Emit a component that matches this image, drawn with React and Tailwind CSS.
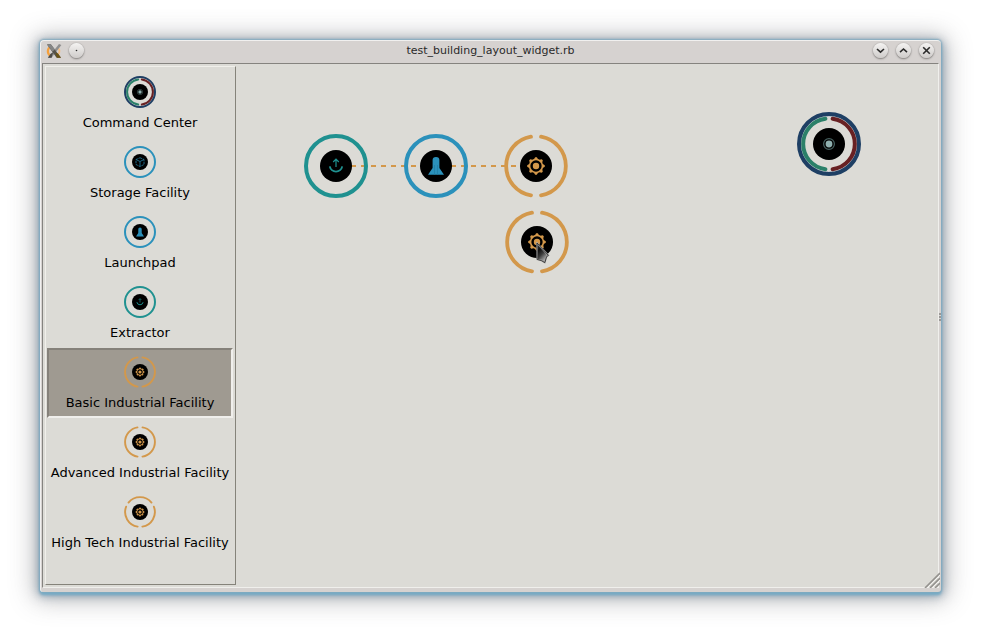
import { useState } from "react";

const ORANGE = "#d3984b";
const BLUE = "#2b91bb";
const TEAL = "#1f9190";

function Gear() {
  return (
    <g fill={ORANGE}>
      {[0, 45, 90, 135, 180, 225, 270, 315].map((a) => (
        <path key={a} d="M29.4 26 L31.2 23.2 H32.8 L34.6 26 Z" transform={`rotate(${a} 32 32)`} />
      ))}
      <circle cx="32" cy="32" r="6.4" fill="none" stroke={ORANGE} strokeWidth="1.5" />
      <circle cx="32" cy="32" r="3.2" />
    </g>
  );
}

const TWO_ARCS = (
  <g fill="none" stroke={ORANGE} strokeWidth="3.8" strokeLinecap="round">
    <path d="M27 2.7 A29.7 29.7 0 0 0 27 61.3" />
    <path d="M37 2.7 A29.7 29.7 0 0 1 37 61.3" />
  </g>
);

function BuildingIcon({ type, className }) {
  return (
    <svg viewBox="0 0 64 64" className={className} aria-hidden="true">
      {type === "command" && (
        <g fill="none" strokeWidth="4">
          <circle cx="32" cy="32" r="27.6" stroke="#c9cdd0" strokeWidth="1.4" />
          <circle cx="32" cy="32" r="30" stroke="#1e3f64" />
          <g strokeLinecap="round">
            <path d="M28.4 6.8 A25.4 25.4 0 0 0 28.4 57.2" stroke="#2b8069" />
            <path d="M35.6 6.8 A25.4 25.4 0 0 1 35.6 57.2" stroke="#682123" />
          </g>
        </g>
      )}
      {(type === "storage" || type === "launchpad") && (
        <circle cx="32" cy="32" r="30" fill="none" stroke={BLUE} strokeWidth="4" />
      )}
      {type === "extractor" && <circle cx="32" cy="32" r="30" fill="none" stroke={TEAL} strokeWidth="4" />}
      {(type === "basic" || type === "advanced") && TWO_ARCS}
      {type === "hightech" && (
        <g fill="none" stroke={ORANGE} strokeWidth="3.8" strokeLinecap="round">
          {[0, 120, 240].map((a) => (
            <path key={a} d="M9 13.2 A29.7 29.7 0 0 1 55 13.2" transform={`rotate(${a} 32 32)`} />
          ))}
        </g>
      )}
      <circle cx="32" cy="32" r="16" fill="#000" />
      {type === "command" && (
        <g>
          <circle cx="32" cy="32" r="5.4" fill="none" stroke="#46605f" strokeWidth="1.2" />
          <circle cx="32" cy="32" r="3.4" fill="#8fb0af" />
        </g>
      )}
      {type === "storage" && (
        <g fill="none" stroke="#23779a" strokeWidth="1.7">
          <path d="M32 23.5 L40 27 V37 L32 41 L24 37 V27 Z" strokeDasharray="5 1.5" />
          <path d="M24 27 L32 31 L40 27 M32 31 V41" />
        </g>
      )}
      {type === "launchpad" && (
        <g>
          <path d="M28.6 26 Q28.6 23 32 23 Q35.4 23 35.4 26 V34 L40 40.8 H24 L28.6 34 Z" fill={BLUE} />
          <path d="M30.5 31 V40.5 M33.5 31 V40.5" stroke="#227fa6" strokeWidth="0.8" />
        </g>
      )}
      {type === "extractor" && (
        <g fill="none" stroke={TEAL}>
          <path d="M25.8 32.4 A6.3 6.3 0 0 0 38.2 32.4" strokeWidth="1.9" />
          <path d="M32 33 V25.5 M29.2 28 L32 25.2 L34.8 28" strokeWidth="1.2" />
        </g>
      )}
      {(type === "basic" || type === "advanced" || type === "hightech") && <Gear />}
    </svg>
  );
}

const TOOLS = [
  ["command", "Command Center"],
  ["storage", "Storage Facility"],
  ["launchpad", "Launchpad"],
  ["extractor", "Extractor"],
  ["basic", "Basic Industrial Facility"],
  ["advanced", "Advanced Industrial Facility"],
  ["hightech", "High Tech Industrial Facility"],
];

function TitleButton({ label, children }) {
  return (
    <button
      type="button"
      aria-label={label}
      className="flex size-[15px] items-center justify-center rounded-full bg-linear-to-b from-[#f4f3f2] to-[#cfccca] shadow-[0_0_1px_0_#8f8c8a,0_1px_2px_0_#7f7c7a]"
    >
      <svg viewBox="0 0 15 15" className="size-[15px]" fill="none" stroke="#2b2b2b" strokeWidth="1.6">
        {children}
      </svg>
    </button>
  );
}

function AppLogo() {
  return (
    <svg viewBox="0 0 16 16" className="size-4" aria-hidden="true">
      <path d="M5 3.4 A5.4 5.4 0 0 0 4 12.6" fill="none" stroke="#f5a03c" strokeWidth="2.2" />
      <path d="M11.6 4.4 A5.4 5.4 0 0 1 12.6 11" fill="none" stroke="#f3bf85" strokeWidth="1.8" />
      <path d="M13 1 L15.4 2 L5.6 14.8 L2.2 14.8 Z" fill="#8f8f8f" />
      <path d="M4.6 10.8 L7 9.6 L5.6 14.8 H1.8 Z" fill="#4c4a46" />
      <path d="M1 1.6 L4.6 1 L15 14.8 H10.6 Z" fill="#55524a" />
      <path d="M1 1.6 L4.6 1 L9 6.6 L6.4 8.6 Z" fill="#858585" />
      <path d="M9.6 10 L12 10.4 L15 14.8 H11 Z" fill="#6b5312" />
    </svg>
  );
}

export default function App() {
  const [selected, setSelected] = useState("basic");
  return (
    <div className="flex min-h-screen bg-white p-10 font-['DejaVu_Sans',sans-serif] text-black">
      <main className="relative flex flex-1 flex-col rounded-t-[4px] rounded-b-[3px] border-t border-l border-[#f1f0ef] bg-[#d6d2d0] shadow-[0_0_2px_1px_#80aabf,0_3px_3px_0_#70aac8,0_2px_10px_2px_rgba(95,125,148,0.6),0_2px_24px_6px_rgba(90,90,95,0.4)]">
        <header className="flex h-[22px] items-center gap-[7px] px-[5px] pb-[3px]">
          <AppLogo />
          <TitleButton label="Window menu">
            <circle cx="7.5" cy="7.5" r="0.8" fill="#2b2b2b" stroke="none" />
          </TitleButton>
          <h1 className="flex-1 pl-6 text-center text-[11px] leading-4 text-[#2a2a2a]">
            test_building_layout_widget.rb
          </h1>
          <div className="flex gap-2 pr-[2px]">
            <TitleButton label="Minimize">
              <path d="M4 6 L7.5 9.2 L11 6" />
            </TitleButton>
            <TitleButton label="Maximize">
              <path d="M4 9.2 L7.5 6 L11 9.2" />
            </TitleButton>
            <TitleButton label="Close">
              <path d="M4.2 4.2 L10.8 10.8 M10.8 4.2 L4.2 10.8" />
            </TitleButton>
          </div>
        </header>

        <div className="relative mr-[2px] mb-1 ml-px flex flex-1 border border-t-[#85837f] border-r-[#f0efec] border-b-[#f0efec] border-l-[#85837f] bg-[#dcdbd6]">
          <nav
            aria-label="Buildings"
            className="m-[2px] mr-0 flex w-[191px] flex-col border border-t-[#f0efea] border-r-[#85837a] border-b-[#85837a] border-l-[#f0efea] p-px pr-[2px]"
          >
            {TOOLS.map(([type, name]) => (
              <button
                key={type}
                type="button"
                aria-pressed={selected === type}
                onClick={() => setSelected(type)}
                className={
                  "flex h-[70px] flex-col items-center gap-[5px] border-2 pt-[6px] text-[13px] leading-5 whitespace-nowrap " +
                  (selected === type
                    ? "border-t-[#85817a] border-r-[#f0efec] border-b-[#f0efec] border-l-[#85817a] bg-[#9f9a91]"
                    : "border-transparent")
                }
              >
                <BuildingIcon type={type} className="size-8 shrink-0" />
                {name}
              </button>
            ))}
          </nav>

          <section aria-label="Layout" className="relative flex-1">
            <svg className="absolute top-[101px] left-[100px] h-[2px] w-[200px]" aria-hidden="true">
              <path d="M0 1 H200" stroke={ORANGE} strokeWidth="2" strokeDasharray="5 5" strokeDashoffset="5" />
            </svg>
            <BuildingIcon type="extractor" className="absolute top-[70px] left-[68px] size-16" />
            <BuildingIcon type="launchpad" className="absolute top-[70px] left-[168px] size-16" />
            <BuildingIcon type="basic" className="absolute top-[70px] left-[268px] size-16" />
            <BuildingIcon type="basic" className="absolute top-[146px] left-[269px] size-16" />
            <BuildingIcon type="command" className="absolute top-[48px] left-[561px] size-16" />
            <svg viewBox="0 0 16 24" className="absolute top-[178px] left-[300px] h-6 w-4" aria-hidden="true">
              <defs>
                <linearGradient id="pointer" x1="0" y1="0" x2="0.6" y2="1">
                  <stop offset="0" stopColor="#444" />
                  <stop offset="0.35" stopColor="#111" />
                  <stop offset="0.6" stopColor="#3a3a3a" />
                  <stop offset="1" stopColor="#c0c0c0" />
                </linearGradient>
              </defs>
              <path d="M1 1 L12.4 13.4 L10.6 14.6 L8.8 20.6 L5.4 18.6 L1.2 17.4 Z" fill="url(#pointer)" stroke="#a9a9a9" strokeWidth="1.6" />
              <path d="M1 1 L12.4 13.4 L10.6 14.6 L8.8 20.6 L5.4 18.6 L1.2 17.4 Z" fill="none" stroke="#222" strokeWidth="0.8" />
            </svg>
          </section>

          <svg viewBox="0 0 16 16" className="absolute right-[-2px] bottom-[-1px] size-4" fill="none" aria-hidden="true">
            <path d="M1 16 L16 1 M6 16 L16 6 M11 16 L16 11" stroke="#94928e" strokeWidth="1.6" />
            <path d="M3 16 L16 3 M8 16 L16 8" stroke="#f4f3f0" strokeWidth="1" />
          </svg>
        </div>

        <div className="absolute top-1/2 right-0 flex -translate-y-1/2 flex-col gap-px" aria-hidden="true">
          <span className="size-[2px] bg-[#9a9896]" />
          <span className="size-[2px] bg-[#9a9896]" />
          <span className="size-[2px] bg-[#9a9896]" />
        </div>
      </main>
    </div>
  );
}
